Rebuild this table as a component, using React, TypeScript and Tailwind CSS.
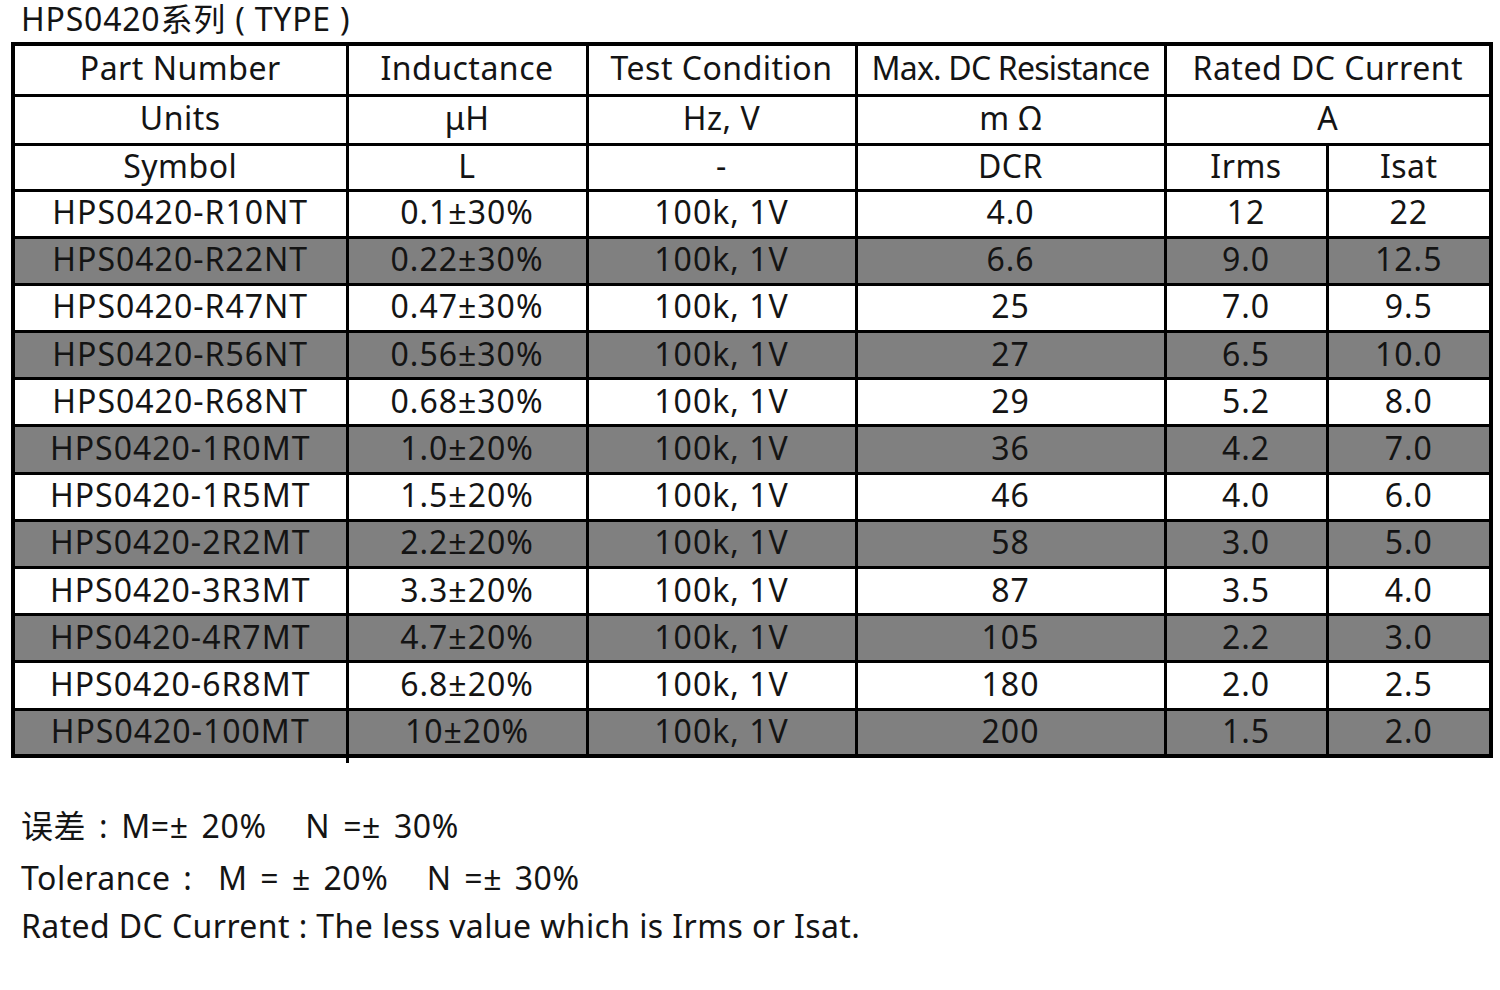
const rows = [
  ['HPS0420-R10NT', '0.1±30%', '100k, 1V', '4.0', '12', '22'],
  ['HPS0420-R22NT', '0.22±30%', '100k, 1V', '6.6', '9.0', '12.5'],
  ['HPS0420-R47NT', '0.47±30%', '100k, 1V', '25', '7.0', '9.5'],
  ['HPS0420-R56NT', '0.56±30%', '100k, 1V', '27', '6.5', '10.0'],
  ['HPS0420-R68NT', '0.68±30%', '100k, 1V', '29', '5.2', '8.0'],
  ['HPS0420-1R0MT', '1.0±20%', '100k, 1V', '36', '4.2', '7.0'],
  ['HPS0420-1R5MT', '1.5±20%', '100k, 1V', '46', '4.0', '6.0'],
  ['HPS0420-2R2MT', '2.2±20%', '100k, 1V', '58', '3.0', '5.0'],
  ['HPS0420-3R3MT', '3.3±20%', '100k, 1V', '87', '3.5', '4.0'],
  ['HPS0420-4R7MT', '4.7±20%', '100k, 1V', '105', '2.2', '3.0'],
  ['HPS0420-6R8MT', '6.8±20%', '100k, 1V', '180', '2.0', '2.5'],
  ['HPS0420-100MT', '10±20%', '100k, 1V', '200', '1.5', '2.0'],
];

const cell = 'border-[3px] border-black p-0 pb-[3px] text-center align-middle whitespace-nowrap';

export default function App() {
  return (
    <div className="w-[1500px] h-[990px] bg-white text-[#141414] font-['Noto_Sans','Noto_Sans_CJK_SC',sans-serif]">
      {/* title */}
      <div className="pl-[21px] h-[42px] text-[32px] leading-[38px] tracking-[0.8px]">HPS0420系列 ( TYPE )</div>

      {/* spec table */}
      <div className="pl-[11px]">
        <table className="w-[1478px] table-fixed border-collapse border-[4px] border-black text-[32px] leading-none">
          <colgroup>
            <col className="w-[334px]" />
            <col className="w-[240px]" />
            <col className="w-[269px]" />
            <col className="w-[309px]" />
            <col className="w-[162px]" />
            <col className="w-[164px]" />
          </colgroup>
          <tbody className="tracking-[0.5px]">
            <tr className="h-[51px]">
              <td className={cell}>Part Number</td>
              <td className={cell}>Inductance</td>
              <td className={cell}>Test Condition</td>
              <td className={`${cell} tracking-[-0.8px]`}>Max. DC Resistance</td>
              <td className={cell} colSpan={2}>Rated DC Current</td>
            </tr>
            <tr className="h-[49px]">
              <td className={cell}>Units</td>
              <td className={cell}>μH</td>
              <td className={cell}>Hz, V</td>
              <td className={cell}>m Ω</td>
              <td className={cell} colSpan={2}>A</td>
            </tr>
            <tr className="h-[46px]">
              <td className={cell}>Symbol</td>
              <td className={cell}>L</td>
              <td className={cell}>-</td>
              <td className={cell}>DCR</td>
              <td className={cell}>Irms</td>
              <td className={cell}>Isat</td>
            </tr>
            {rows.map((r, i) => (
              <tr key={r[0]} className={i % 2 === 1 ? 'h-[47.2px] bg-[#808080] tracking-[1px]' : 'h-[47.2px] bg-white tracking-[1px]'}>
                {r.map((v, j) => (
                  <td key={j} className={cell}>{v}</td>
                ))}
              </tr>
            ))}
          </tbody>
        </table>
        {/* column line overshoot below the table */}
        <div className="ml-[335px] w-[3px] h-[5px] bg-black" />
      </div>

      {/* notes */}
      <div className="pl-[21px] pt-[37px] text-[32px] leading-[52px] tracking-[0.4px]">
        <div className="[word-spacing:4px] tracking-[0.6px]">误差 : M=± 20%&nbsp;&nbsp;&nbsp;N =± 30%</div>
        <div className="[word-spacing:4px] tracking-[0.5px]">Tolerance :&nbsp;&nbsp;M = ± 20%&nbsp;&nbsp;&nbsp;N =± 30%</div>
        <div className="-mt-[4px]">Rated DC Current : The less value which is Irms or Isat.</div>
      </div>
    </div>
  );
}
